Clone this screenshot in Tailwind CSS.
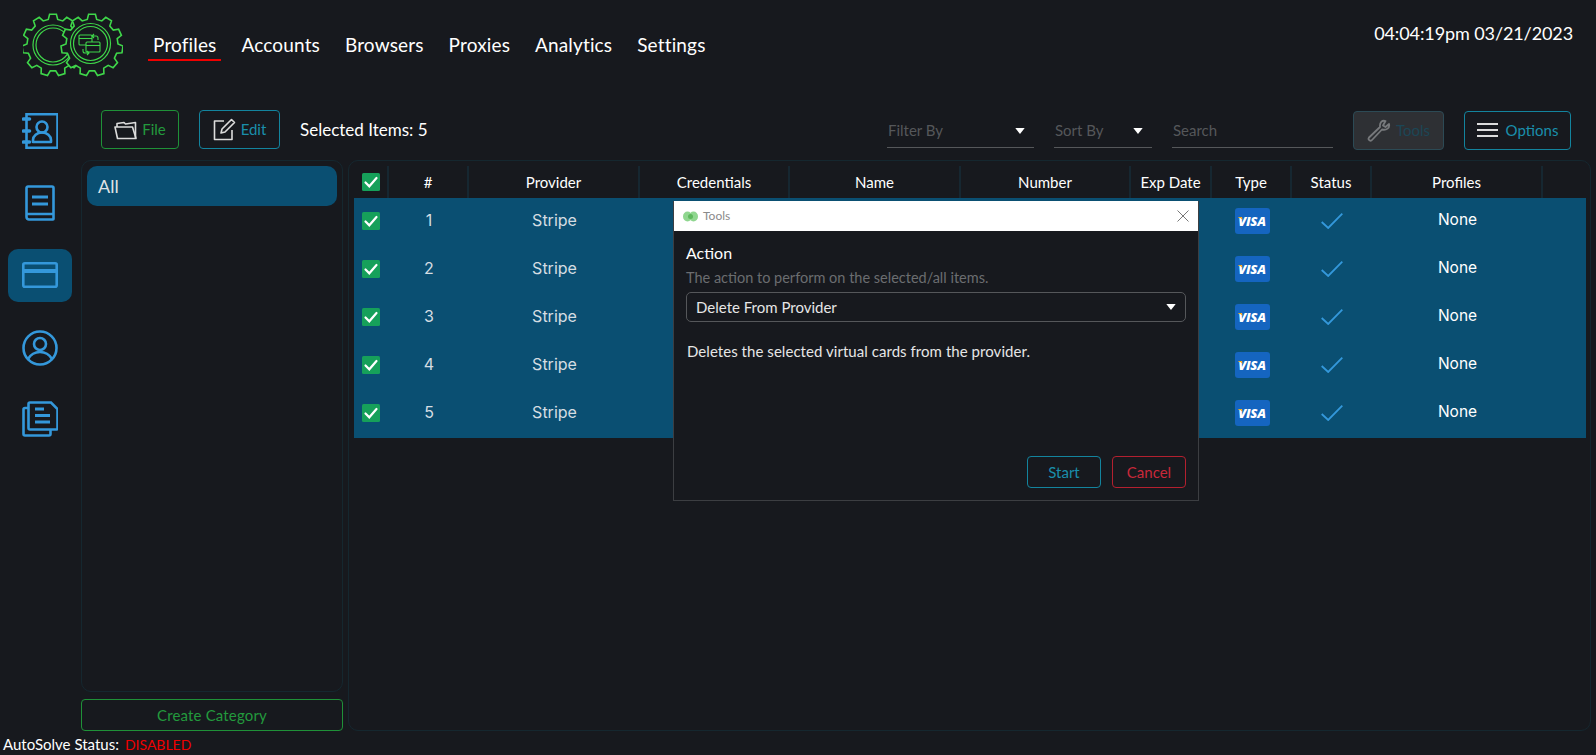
<!DOCTYPE html>
<html lang="en">
<head>
  <meta charset="UTF-8" />
  <title>Profiles</title>
  <script src="https://cdn.jsdelivr.net/npm/@tailwindcss/browser@4"></script>
</head>
<body class="relative flex h-screen flex-col overflow-hidden bg-[#17191e] font-['Lato',sans-serif] text-white">
  <svg class="hidden">
    <symbol id="row-check" viewBox="0 0 22 16"><path d="M.7 9l6.500 6L21.300 .7" fill="none" stroke="#3498db" stroke-width="1.800"/></symbol>
    <symbol id="box-check" viewBox="0 0 18 18"><rect width="18" height="18" rx="1.5" fill="#16a05a"/><path d="M3.5 9.5l3.8 3.8L14.5 5" fill="none" stroke="#fff" stroke-width="2.2" stroke-linecap="round"/></symbol>
    <symbol id="caret" viewBox="0 0 11 7"><path d="M0 0h11L5.5 7z" fill="#fff"/></symbol>
    <symbol id="visa-mark" viewBox="0 0 5 3"><path d="M0 0h3.500L5 3C3.500 1.500 2 .700 0 .400z" fill="#f7a600"/></symbol>
  </svg>

  <!-- Header -->
  <header class="flex h-[105px] shrink-0 items-start pl-[23px] pr-[23px]">
    <svg class="mt-[13px] h-[64px] w-[100px] shrink-0" viewBox="0 0 100 64" fill="none" stroke="#3fd64a" stroke-width="1.600">
      <path class="gear" data-cx="30" data-cy="32" d=""/>
      <circle cx="30" cy="32" r="20" stroke-width="1.200"/>
      <circle cx="30" cy="32" r="17" stroke-width="1.200"/>
      <path class="gear" data-cx="69" data-cy="32" fill="#17191e" d=""/>
      <circle cx="67.500" cy="30.500" r="20" stroke-width="1.200"/>
      <circle cx="67.500" cy="30.500" r="17" stroke-width="1.200"/>
      <g stroke-width="1.100">
        <rect x="56" y="22" width="13" height="10" rx="1"/><path d="M56 25.500h13"/>
        <rect x="63" y="29" width="14" height="10" rx="1" fill="#17191e"/><path d="M63 32.500h14"/>
        <path d="M71 21l-2 2 2 2M69 23h4a2 2 0 0 1 2 2v2"/>
        <path d="M64 42l2-2-2-2M66 40h-4a2 2 0 0 1-2-2v-2"/>
      </g>
    </svg>
    <nav class="ml-[25px] flex gap-[15px] pt-[34px] text-[19px] leading-[22px] tracking-[0.15px]">
      <a href="#" class="border-b-2 border-[#f00000] px-[5px] pb-[3px]">Profiles</a>
      <a href="#" class="px-[5px]">Accounts</a>
      <a href="#" class="px-[5px]">Browsers</a>
      <a href="#" class="px-[5px]">Proxies</a>
      <a href="#" class="px-[5px]">Analytics</a>
      <a href="#" class="px-[5px]">Settings</a>
    </nav>
    <div class="ml-auto pt-[22px] text-[18px] leading-[22px] tracking-[-0.1px]">04:04:19pm 03/21/2023</div>
  </header>

  <!-- Main -->
  <main class="flex min-h-0 flex-1 pr-[5px]">
    <aside class="flex w-[81px] shrink-0 flex-col gap-[19px] pl-[8px] text-[#3498db]">
      <a class="flex h-[53px] w-[64px] items-center justify-center pb-[2px]">
        <svg class="h-[36px] w-[36px]" viewBox="0 0 36 36" fill="none" stroke="currentColor" stroke-width="2.6">
          <path d="M4.500 1.300h31v33.400h-31z"/>
          <path d="M1.500 6h6M1.500 18h6M1.500 29h6" stroke-width="3.600" stroke-linecap="round"/>
          <circle cx="20" cy="14" r="5.500"/>
          <path d="M11 29v-2a9 7.500 0 0 1 18 0v2z" stroke-linejoin="round"/>
        </svg>
      </a>
      <a class="flex h-[53px] w-[64px] items-center justify-center pb-[2px]">
        <svg class="h-[36px] w-[30px]" viewBox="0 0 30 36" fill="none" stroke="currentColor" stroke-width="2.6">
          <path d="M1.500 31V3A1.500 1.500 0 0 1 3 1.500h24A1.500 1.500 0 0 1 28.500 3v31a.5.5 0 0 1-.5.5H4A2.500 2.500 0 0 1 1.500 32v-3h27"/>
          <path d="M7 12h16M7 19h16" stroke-width="3"/>
        </svg>
      </a>
      <a class="flex h-[53px] w-[64px] items-center justify-center rounded-[10px] bg-[#0a4f72] pb-[2px]">
        <svg class="h-[26px] w-[36px]" viewBox="0 0 36 26" fill="none" stroke="currentColor" stroke-width="2.6">
          <rect x="1.300" y="1.300" width="33.400" height="23.400" rx="1.500"/>
          <path d="M1 9h34" stroke-width="4"/>
        </svg>
      </a>
      <a class="flex h-[53px] w-[64px] items-center justify-center">
        <svg class="h-[36px] w-[36px]" viewBox="0 0 36 36" fill="none" stroke="currentColor" stroke-width="2.6">
          <circle cx="18" cy="18" r="16.500"/>
          <circle cx="18" cy="14" r="6"/>
          <path d="M6 29c3-5 7-7 12-7s9 2 12 7"/>
        </svg>
      </a>
      <a class="flex h-[53px] w-[64px] items-center justify-center pb-[2px]">
        <svg class="h-[36px] w-[36px]" viewBox="0 0 36 36" fill="none" stroke="currentColor" stroke-width="2.6">
          <path d="M7 1.500h21l6.500 6.500v19a1.500 1.500 0 0 1-1.500 1.500H7A1.500 1.500 0 0 1 5.500 27V3A1.500 1.500 0 0 1 7 1.500z" transform="translate(1 0)"/>
          <path d="M6 7H3a1.500 1.500 0 0 0-1.500 1.500V33A1.500 1.500 0 0 0 3 34.500h24a1.500 1.500 0 0 0 1.500-1.500v-4"/>
          <path d="M13 8h9M13 14.500h15M13 21h15" stroke-width="2.800"/>
        </svg>
      </a>
    </aside>

    <div class="flex min-w-0 flex-1 flex-col pt-[5px]">
      <!-- Toolbar -->
      <div class="flex h-[40px] shrink-0 items-center px-[20px]">
        <button class="flex h-[39px] w-[78px] items-center justify-center gap-[5px] self-start rounded-[4px] border border-[#1f9138] text-[15px] text-[#23993d]">
          <svg class="h-[20px] w-[23px]" viewBox="0 0 23 20" fill="none" stroke="#dcdcdc" stroke-width="1.600" stroke-linejoin="round"><path d="M3 7V3.500l7-1 1.500 1.500 10-1.500V18"/><path d="M1 7h17.500L22 18.500H3.500z"/></svg>
          File
        </button>
        <button class="ml-[20px] flex h-[39px] w-[81px] items-center justify-center gap-[5px] self-start rounded-[4px] border border-[#13849e] text-[15px] text-[#1a8fab]">
          <svg class="h-[23px] w-[23px]" viewBox="0 0 23 23" fill="none" stroke="#dcdcdc" stroke-width="1.600" stroke-linejoin="round"><path d="M11 3H1.500v18.500H19V12"/><path d="M8 15l1-4L18.500 1.500l3 3L12 14z"/></svg>
          Edit
        </button>
        <span class="ml-[20px] text-[17px]">Selected Items: 5</span>
        <div class="ml-auto flex h-[36px] w-[147px] items-center justify-between border-b border-[#55575a] pl-[1px] pr-[9px] pt-[2px] text-[15px] text-[#55575a]">Filter By<svg class="h-[6px] w-[10px]"><use href="#caret"/></svg></div>
        <div class="ml-[20px] flex h-[36px] w-[98px] items-center justify-between border-b border-[#55575a] pl-[1px] pr-[9px] pt-[2px] text-[15px] text-[#55575a]">Sort By<svg class="h-[6px] w-[10px]"><use href="#caret"/></svg></div>
        <div class="ml-[20px] flex h-[36px] w-[161px] items-center border-b border-[#55575a] pl-[1px] pt-[2px] text-[15px] text-[#55575a]">Search</div>
        <button class="ml-[20px] flex h-[39px] w-[91px] items-center justify-center gap-[5px] rounded-[4px] border border-[#2c4a55] bg-[#2e3034] text-[15px] text-[#1c4656]">
          <svg class="h-[23px] w-[24px]" viewBox="0 0 24 23" fill="none" stroke="#77797c" stroke-width="1.800"><path d="M22 5l-3.500 3L16 6.500l2.500-4.500C15 1 12.500 3.500 13 8L2 18.500a2 2 0 0 0 2.500 3L15 10.500c4.500 1 8-1.500 7-5.500z" stroke-linejoin="round"/></svg>
          Tools
        </button>
        <button class="ml-[20px] flex h-[39px] w-[107px] items-center justify-center gap-[8px] rounded-[4px] border border-[#13849e] text-[15px] text-[#1a8fab]">
          <svg class="h-[16px] w-[21px]" viewBox="0 0 21 16" stroke="#dcdcdc" stroke-width="1.800"><path d="M0 2h21M0 8h21M0 14h21"/></svg>
          Options
        </button>
      </div>

      <div class="mt-[10px] flex min-h-0 flex-1 gap-[5px]">
        <!-- Categories -->
        <div class="flex w-[262px] shrink-0 flex-col gap-[7px]">
          <div class="flex-1 rounded-[10px] border border-[#15272f] p-[5px]">
            <div class="flex h-[40px] items-center rounded-[10px] bg-[#0a4f72] pl-[11px] text-[18px] text-[#dfe3e6]">All</div>
          </div>
          <button class="h-[32px] rounded-[4px] border border-[#1f9138] text-[15px] tracking-[0.15px] text-[#23993d]">Create Category</button>
        </div>

        <!-- Table -->
        <div class="flex-1 rounded-[10px] border border-[#15272f] pl-[5px] pr-[4px] pt-[5px]">
          <div class="grid h-[32px] grid-cols-[35px_80px_171px_150px_171px_170px_81px_80px_80px_171px_43px] items-center text-center text-[15px]">
            <div class="flex h-full items-center border-r-2 border-[#162731] pl-[8px]"><svg class="h-[18px] w-[18px]"><use href="#box-check"/></svg></div>
            <div class="flex h-full items-center justify-center border-r-2 border-[#162731]">#</div>
            <div class="flex h-full items-center justify-center border-r-2 border-[#162731]">Provider</div>
            <div class="flex h-full items-center justify-center border-r-2 border-[#162731]">Credentials</div>
            <div class="flex h-full items-center justify-center border-r-2 border-[#162731]">Name</div>
            <div class="flex h-full items-center justify-center border-r-2 border-[#162731]">Number</div>
            <div class="flex h-full items-center justify-center border-r-2 border-[#162731]">Exp Date</div>
            <div class="flex h-full items-center justify-center border-r-2 border-[#162731]">Type</div>
            <div class="flex h-full items-center justify-center border-r-2 border-[#162731]">Status</div>
            <div class="flex h-full items-center justify-center border-r-2 border-[#162731]">Profiles</div>
            <div></div>
          </div>
          <div class="bg-[#0a4f72] font-['Inter',sans-serif] text-[16px] text-[#d5dde2]">
            <div class="grid h-[48px] grid-cols-[35px_80px_171px_150px_171px_170px_81px_80px_80px_171px_43px] items-center pb-[2px] text-center">
              <div class="flex pl-[8px]"><svg class="h-[18px] w-[18px]"><use href="#box-check"/></svg></div>
              <div class="-translate-y-[1px]">1</div><div class="-translate-y-[1px]">Stripe</div><div></div><div></div><div></div><div></div>
              <div class="flex justify-center"><span class="relative flex h-[26px] w-[35px] items-center justify-center rounded-[3px] bg-[#1565c0] font-['Open_Sans',sans-serif] text-[13px] font-extrabold italic leading-none tracking-[-0.2px] text-white">VISA<svg class="absolute left-[3px] top-[9px] h-[3px] w-[5px]"><use href="#visa-mark"/></svg></span></div>
              <div class="flex justify-center"><svg class="h-[16px] w-[22px]"><use href="#row-check"/></svg></div>
              <div class="-translate-y-[1px] text-[15.5px] text-white">None</div><div></div>
            </div>
            <div class="grid h-[48px] grid-cols-[35px_80px_171px_150px_171px_170px_81px_80px_80px_171px_43px] items-center pb-[2px] text-center">
              <div class="flex pl-[8px]"><svg class="h-[18px] w-[18px]"><use href="#box-check"/></svg></div>
              <div class="-translate-y-[1px]">2</div><div class="-translate-y-[1px]">Stripe</div><div></div><div></div><div></div><div></div>
              <div class="flex justify-center"><span class="relative flex h-[26px] w-[35px] items-center justify-center rounded-[3px] bg-[#1565c0] font-['Open_Sans',sans-serif] text-[13px] font-extrabold italic leading-none tracking-[-0.2px] text-white">VISA<svg class="absolute left-[3px] top-[9px] h-[3px] w-[5px]"><use href="#visa-mark"/></svg></span></div>
              <div class="flex justify-center"><svg class="h-[16px] w-[22px]"><use href="#row-check"/></svg></div>
              <div class="-translate-y-[1px] text-[15.5px] text-white">None</div><div></div>
            </div>
            <div class="grid h-[48px] grid-cols-[35px_80px_171px_150px_171px_170px_81px_80px_80px_171px_43px] items-center pb-[2px] text-center">
              <div class="flex pl-[8px]"><svg class="h-[18px] w-[18px]"><use href="#box-check"/></svg></div>
              <div class="-translate-y-[1px]">3</div><div class="-translate-y-[1px]">Stripe</div><div></div><div></div><div></div><div></div>
              <div class="flex justify-center"><span class="relative flex h-[26px] w-[35px] items-center justify-center rounded-[3px] bg-[#1565c0] font-['Open_Sans',sans-serif] text-[13px] font-extrabold italic leading-none tracking-[-0.2px] text-white">VISA<svg class="absolute left-[3px] top-[9px] h-[3px] w-[5px]"><use href="#visa-mark"/></svg></span></div>
              <div class="flex justify-center"><svg class="h-[16px] w-[22px]"><use href="#row-check"/></svg></div>
              <div class="-translate-y-[1px] text-[15.5px] text-white">None</div><div></div>
            </div>
            <div class="grid h-[48px] grid-cols-[35px_80px_171px_150px_171px_170px_81px_80px_80px_171px_43px] items-center pb-[2px] text-center">
              <div class="flex pl-[8px]"><svg class="h-[18px] w-[18px]"><use href="#box-check"/></svg></div>
              <div class="-translate-y-[1px]">4</div><div class="-translate-y-[1px]">Stripe</div><div></div><div></div><div></div><div></div>
              <div class="flex justify-center"><span class="relative flex h-[26px] w-[35px] items-center justify-center rounded-[3px] bg-[#1565c0] font-['Open_Sans',sans-serif] text-[13px] font-extrabold italic leading-none tracking-[-0.2px] text-white">VISA<svg class="absolute left-[3px] top-[9px] h-[3px] w-[5px]"><use href="#visa-mark"/></svg></span></div>
              <div class="flex justify-center"><svg class="h-[16px] w-[22px]"><use href="#row-check"/></svg></div>
              <div class="-translate-y-[1px] text-[15.5px] text-white">None</div><div></div>
            </div>
            <div class="grid h-[48px] grid-cols-[35px_80px_171px_150px_171px_170px_81px_80px_80px_171px_43px] items-center pb-[2px] text-center">
              <div class="flex pl-[8px]"><svg class="h-[18px] w-[18px]"><use href="#box-check"/></svg></div>
              <div class="-translate-y-[1px]">5</div><div class="-translate-y-[1px]">Stripe</div><div></div><div></div><div></div><div></div>
              <div class="flex justify-center"><span class="relative flex h-[26px] w-[35px] items-center justify-center rounded-[3px] bg-[#1565c0] font-['Open_Sans',sans-serif] text-[13px] font-extrabold italic leading-none tracking-[-0.2px] text-white">VISA<svg class="absolute left-[3px] top-[9px] h-[3px] w-[5px]"><use href="#visa-mark"/></svg></span></div>
              <div class="flex justify-center"><svg class="h-[16px] w-[22px]"><use href="#row-check"/></svg></div>
              <div class="-translate-y-[1px] text-[15.5px] text-white">None</div><div></div>
            </div>
          </div>
        </div>
      </div>
    </div>
  </main>

  <!-- Status -->
  <footer class="flex h-[24px] shrink-0 items-center pl-[3px] pt-[3px] text-[15px]">
    <span>AutoSolve Status:</span><span class="ml-[6px] text-[14px] text-[#f00000]">DISABLED</span>
  </footer>

  <!-- Tools modal -->
  <div class="absolute left-[673px] top-[201px] flex h-[300px] w-[526px] flex-col border border-t-0 border-[#3c3e42] bg-[#17191e]">
    <div class="flex h-[30px] shrink-0 items-center bg-white pl-[9px] pr-[9px] text-[12px] text-[#8a8a8a]">
      <svg class="h-[11px] w-[15px]" viewBox="0 0 15 11" fill="#8fd68f"><ellipse cx="4.500" cy="5.500" rx="4.500" ry="5"/><ellipse cx="10.500" cy="5.500" rx="4.500" ry="5"/><circle cx="7.500" cy="5.500" r="2.500" fill="#5db85d"/></svg>
      <span class="ml-[5px]">Tools</span>
      <svg class="ml-auto h-[12px] w-[12px]" viewBox="0 0 12 12" stroke="#777" stroke-width="1"><path d="M.5.500l11 11M11.500.500l-11 11"/></svg>
    </div>
    <div class="flex flex-1 flex-col px-[12px]">
      <div class="mt-[12px] text-[16px] leading-[20px]">Action</div>
      <div class="mt-[5px] text-[14.5px] leading-[20px] text-[#6b6d70]">The action to perform on the selected/all items.</div>
      <div class="mt-[4px] flex h-[30px] items-center justify-between rounded-[5px] border border-[#55575a] pl-[9px] pr-[9px] text-[15px] text-[#e6e6e6]">Delete From Provider<svg class="h-[6px] w-[10px]"><use href="#caret"/></svg></div>
      <div class="mt-[19px] pl-[1px] text-[15px] leading-[20px] tracking-[0.05px] text-[#e6e6e6]">Deletes the selected virtual cards from the provider.</div>
      <div class="mb-[12px] mt-auto flex justify-end gap-[11px]">
        <button class="h-[32px] w-[74px] rounded-[4px] border border-[#13849e] text-[15px] text-[#1a8fab]">Start</button>
        <button class="h-[32px] w-[74px] rounded-[4px] border border-[#b3202f] text-[15px] text-[#c9283a]">Cancel</button>
      </div>
    </div>
  </div>

  <script>
    // gear outline for the logo
    document.querySelectorAll('.gear').forEach(function (el) {
      var cx = +el.dataset.cx, cy = +el.dataset.cy, teeth = 11, pts = [];
      for (var i = 0; i < teeth; i++) {
        var a = i * 2 * Math.PI / teeth, s = 2 * Math.PI / teeth;
        [[-0.32, 26], [-0.19, 31], [0.19, 31], [0.32, 26]].forEach(function (p) {
          var t = a + p[0] * s;
          pts.push((cx + p[1] * Math.sin(t)).toFixed(1) + ' ' + (cy - p[1] * Math.cos(t)).toFixed(1));
        });
      }
      el.setAttribute('d', 'M' + pts.join('L') + 'Z');
    });
  </script>
</body>
</html>
